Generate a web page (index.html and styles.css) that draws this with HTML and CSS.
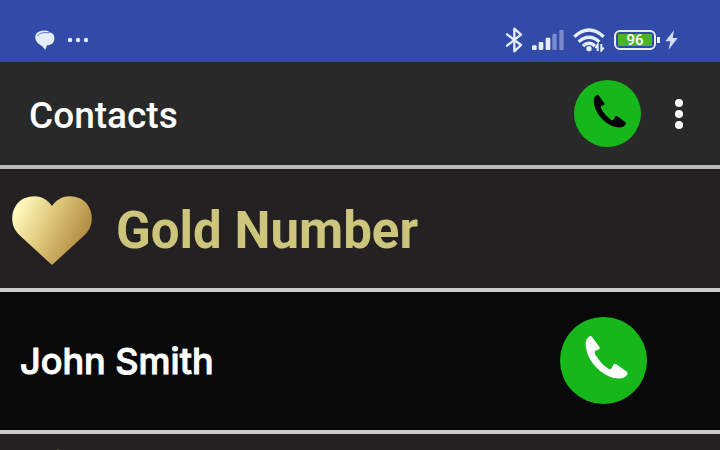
FILE: index.html
```html
<!DOCTYPE html>
<html lang="en">
<head>
<meta charset="utf-8">
<meta name="viewport" content="width=device-width, initial-scale=1">
<title>Contacts</title>
<link rel="stylesheet" href="styles.css">
</head>
<body>
<svg class="defs" aria-hidden="true">
  <symbol id="call" viewBox="0 0 260 260">
    <circle cx="130" cy="130" r="130" fill="#16b71a"/>
    <path fill="currentColor" d="M90 57Q93 56 96 60L118 90Q121 95 116 97L106 101Q102 104 105 111Q122 140 145 155Q151 158 155 152L160 142Q163 138 168 141L199 163Q204 167 201 172Q194 184 176 184Q148 184 118 160Q84 130 77 91Q73 65 90 57Z"/>
  </symbol>
</svg>
<div class="status">
  <div class="group notices">
    <svg width="20" height="20" viewBox="0 0 60 60" aria-label="Messages"><path fill="#e6edfb" d="M1 24C0 9 11 2 24 2Q38 -1 44 7C56 10 59 19 58 27C57 40 49 45 36 46L31 59L21 48C11 43 2 35 1 24Z"/><path d="M7 18Q13 8 26 8L44 8" fill="none" stroke="#5970bd" stroke-width="3"/></svg>
    <svg width="22" height="6" viewBox="0 0 22 6" fill="#e6edfb" aria-label="More notifications"><circle cx="3" cy="3" r="2.2"/><circle cx="11" cy="3" r="2.2"/><circle cx="19" cy="3" r="2.2"/></svg>
  </div>
  <div class="group icons">
    <svg width="18" height="26" viewBox="0 0 54 78" fill="none" stroke="#e6edfb" stroke-width="7" stroke-linejoin="round" stroke-linecap="round" aria-label="Bluetooth"><path d="M6 22L48 54L28 73V5L48 23L6 56"/></svg>
    <svg width="32" height="20" viewBox="0 0 96 60" fill="#e6edfb" aria-label="Signal"><rect y="46" width="14" height="14" rx="3"/><rect x="20" y="36" width="14" height="24" rx="3"/><rect x="41" y="23" width="14" height="37" rx="3"/><g fill="#7b8cce"><rect x="61" y="11" width="13" height="49" rx="3"/><rect x="82" y="0" width="13" height="60" rx="3"/></g></svg>
    <svg width="32" height="24" viewBox="0 0 96 72" fill="none" stroke="#e6edfb" stroke-width="10" aria-label="Wi-Fi"><path d="M4 26Q48 -14 92 26M17 41Q48 14 79 41M30 54Q48 37 66 54"/><circle cx="48" cy="62" r="8" fill="#e6edfb" stroke="none"/><path stroke-width="6" d="M74 69V50L67 60M85 48V68L92 59"/></svg>
    <div class="battery"><span class="level">96</span></div>
    <svg width="13" height="20" viewBox="0 0 39 60" fill="#d5def8" aria-label="Charging"><path d="M27 1L1 34H16L11 59L38 24H23Z"/></svg>
  </div>
</div>
<header class="bar">
  <h1>Contacts</h1>
  <button class="round small" aria-label="Call"><svg><use href="#call"/></svg></button>
  <button class="menu" aria-label="More options"><svg width="10" height="32" viewBox="0 0 10 32" fill="#fff"><circle cx="5" cy="5" r="4"/><circle cx="5" cy="16" r="4"/><circle cx="5" cy="27" r="4"/></svg></button>
</header>
<main>
  <section class="row gold">
    <svg width="80" height="69" viewBox="0 0 240 207" aria-hidden="true">
      <defs><linearGradient id="metal" gradientUnits="userSpaceOnUse" x1="20" y1="35" x2="210" y2="130"><stop offset="0" stop-color="#fff9bd"/><stop offset=".5" stop-color="#dcc475"/><stop offset="1" stop-color="#b58e46"/></linearGradient></defs>
      <path fill="url(#metal)" d="M120 30C140 0 173-6 203 7C238 23 248 68 232 99Q226 110 214 121L120 207L26 121Q14 110 8 99C-8 68 2 23 37 7C67-6 100 0 120 30Z"/>
    </svg>
    <h2>Gold Number</h2>
  </section>
  <section class="row person">
    <span class="name">John Smith</span>
    <button class="round" aria-label="Call John Smith"><svg><use href="#call"/></svg></button>
  </section>
  <section class="next">
    <svg width="8" height="60" viewBox="0 0 8 60" fill="#9a7b48" aria-hidden="true"><path d="M4 0L8 4V60H0V4Z"/></svg>
  </section>
</main>
</body>
</html>
```
FILE: styles.css
```css
* { box-sizing: border-box; }
html { height: 100%; }
body {
  height: 100%;
  margin: 0;
  display: flex;
  flex-direction: column;
  background: #232122;
  color: #fff;
  font-family: Roboto, sans-serif;
}
svg { display: block; flex: none; }
h1, h2 { margin: 0; }
button { padding: 0; border: 0; background: none; color: inherit; cursor: pointer; }
.defs { position: absolute; width: 0; height: 0; }

.status {
  flex: none;
  display: flex;
  justify-content: space-between;
  align-items: center;
  padding: 26px 42px 8px 35px;
  background: #324ba8;
}
.group { display: flex; align-items: center; gap: 8px; height: 28px; }
.notices { gap: 12px; }
.icons { gap: 9px; }
.battery {
  position: relative;
  width: 42px;
  height: 20px;
  padding: 2px;
  border: 2px solid #e6edfb;
  border-radius: 6px;
}
.battery::after {
  content: "";
  position: absolute;
  left: 41px;
  top: 5px;
  width: 3px;
  height: 6px;
  background: #e6edfb;
}
.level {
  display: block;
  height: 12px;
  background: #48b427;
  font-size: 15px;
  line-height: 13px;
  font-weight: 500;
  text-align: center;
}

.bar {
  flex: none;
  display: flex;
  align-items: center;
  padding: 18px 36px 18px 29px;
  background: #292929;
  border-bottom: 4px solid #bbb9b9;
}
h1 { flex: 1; padding-top: 4px; font-size: 37px; line-height: 44px; font-weight: 500; }
.round { width: 87px; height: 87px; border-radius: 50%; }
.round svg { width: 100%; height: 100%; }
.small { width: 67px; height: 67px; color: #000; }
.menu { margin-left: 33px; }

main { flex: 1; min-height: 0; display: flex; flex-direction: column; }
.row { flex: none; display: flex; align-items: center; border-bottom: 4px solid #ccc; }
.gold { gap: 24px; padding: 27px 12px 23px; }
h2 { font-size: 51px; line-height: 61px; font-weight: 700; color: #cdc57c; }
.person {
  justify-content: space-between;
  padding: 25px 73px 26px 20px;
  background: #090909;
}
.name {
  font-family: Inter, sans-serif;
  font-size: 36px;
  line-height: 44px;
  font-weight: 500;
  -webkit-text-stroke: 1px #fff;
}
.next { flex: 1; min-height: 0; overflow: hidden; padding: 15px 54px 0; }
```
